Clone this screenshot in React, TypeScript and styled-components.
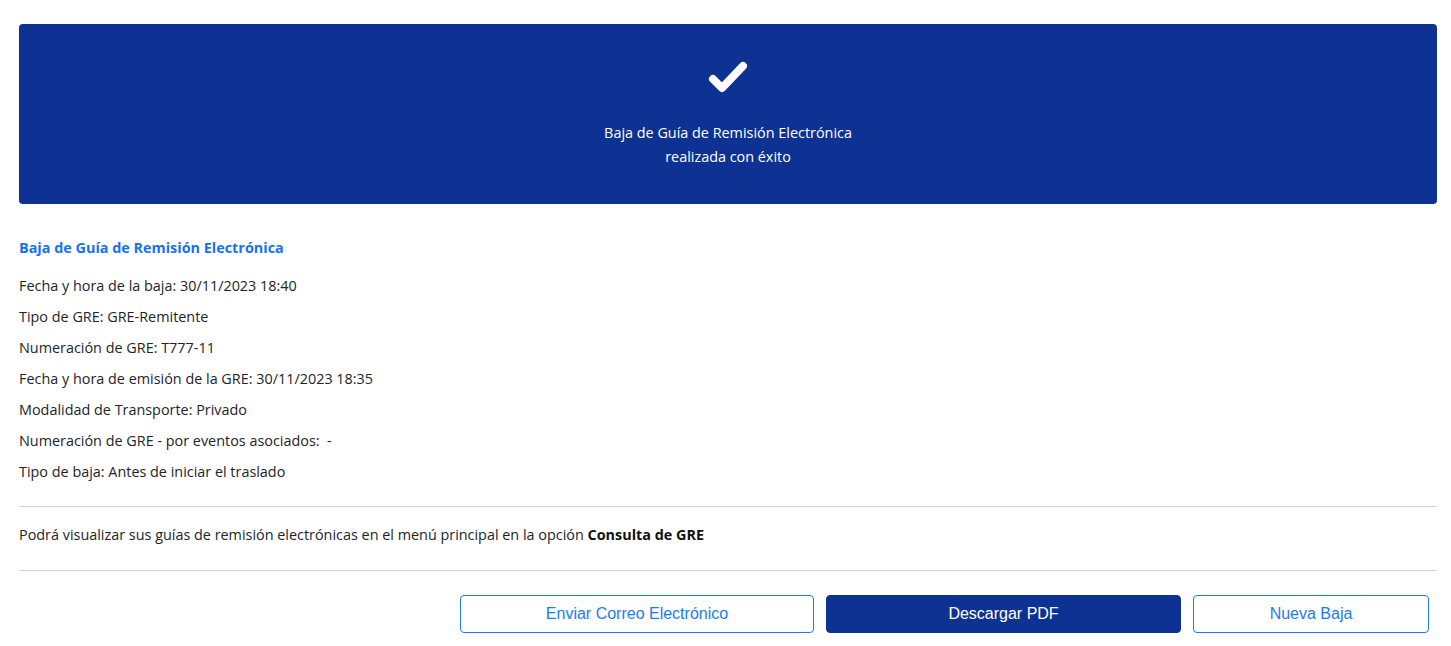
import React from 'react';
import styled, { createGlobalStyle } from 'styled-components';

const GlobalStyle = createGlobalStyle`
    body {
        margin: 0;
        background: #ffffff;
        font-family: 'Open Sans', 'Noto Sans', sans-serif;
        color: #212529;
    }
`;

const Page = styled.div`
    padding: 24px 14px 0 19px;
`;

const Banner = styled.div`
    background-color: #0e3294;
    border-radius: 4px;
    height: 180px;
    display: flex;
    flex-direction: column;
    align-items: center;
    color: #ffffff;
    line-height: 24px;
    text-align: center;
`;

const CheckIcon = styled.svg`
    margin-top: 36px;
    width: 42px;
    height: 34px;
`;

const BannerText = styled.div`
    margin-top: 27px;
    font-size: 14.4px;
`;

const Title = styled.h2`
    margin: 33px 0 16px;
    color: #1573f0;
    font-size: 14.4px;
    font-weight: 700;
    line-height: 22px;
`;

const InfoList = styled.div`
    display: flex;
    flex-direction: column;
    gap: 9px;
`;

const InfoRow = styled.div`
    font-size: 14.4px;
    line-height: 22px;
    color: #212529;
    white-space: pre;
`;

const Divider = styled.hr`
    margin: 0;
    border: none;
    border-top: 1px solid #d3d3d3;
`;

const Note = styled.p`
    margin: 0;
    padding: 17px 0 24px;
    font-size: 14.4px;
    line-height: 22px;
    b {
        font-weight: 700;
        color: #111;
    }
`;

const Section = styled.div<{ $top: number }>`
    margin-top: ${({ $top }) => $top}px;
`;

const ButtonRow = styled.div`
    display: flex;
    justify-content: flex-end;
    gap: 12px;
    padding: 24px 8px 0 0;
`;

const Button = styled.button<{ $primary?: boolean; $w: number }>`
    width: ${({ $w }) => $w}px;
    height: 38px;
    border-radius: 4px;
    font-family: 'Liberation Sans', Arial, sans-serif;
    font-size: 16px;
    cursor: pointer;
    border: 1px solid ${({ $primary }) => ($primary ? '#0e3294' : '#1a7cf5')};
    background: ${({ $primary }) => ($primary ? '#0e3294' : '#ffffff')};
    color: ${({ $primary }) => ($primary ? '#ffffff' : '#1a7cf5')};
`;

const rows = [
    'Fecha y hora de la baja: 30/11/2023 18:40',
    'Tipo de GRE: GRE-Remitente',
    'Numeración de GRE: T777-11',
    'Fecha y hora de emisión de la GRE: 30/11/2023 18:35',
    'Modalidad de Transporte: Privado',
    'Numeración de GRE - por eventos asociados:  -',
    'Tipo de baja: Antes de iniciar el traslado',
];

const App = () => {
    return (
        <Page>
            <GlobalStyle />
            <Banner>
                <CheckIcon viewBox="0 0 42 34">
                    <polyline
                        points="6,19 15,28 36,6"
                        fill="none"
                        stroke="#ffffff"
                        strokeWidth="8"
                        strokeLinecap="round"
                        strokeLinejoin="round"
                    />
                </CheckIcon>
                <BannerText>
                    Baja de Guía de Remisión Electrónica
                    <br />
                    realizada con éxito
                </BannerText>
            </Banner>
            <Title>Baja de Guía de Remisión Electrónica</Title>
            <InfoList>
                {rows.map((r) => (
                    <InfoRow key={r}>{r}</InfoRow>
                ))}
            </InfoList>
            <Section $top={23}>
                <Divider />
                <Note>
                    Podrá visualizar sus guías de remisión electrónicas en el menú principal en la opción <b>Consulta de GRE</b>
                </Note>
                <Divider />
            </Section>
            <ButtonRow>
                <Button $w={354}>Enviar Correo Electrónico</Button>
                <Button $primary $w={355}>Descargar PDF</Button>
                <Button $w={236}>Nueva Baja</Button>
            </ButtonRow>
        </Page>
    );
};

export default App;
